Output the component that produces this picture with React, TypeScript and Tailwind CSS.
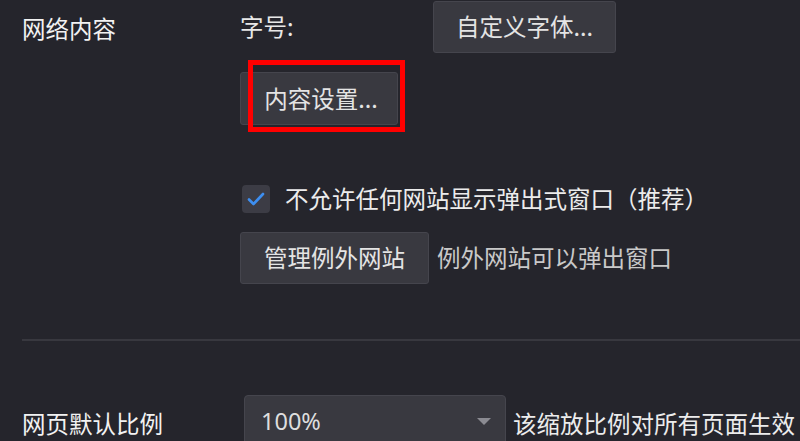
import React from 'react';

const font = { fontFamily: '"Noto Sans CJK SC", "Noto Sans", sans-serif' };

const Btn: React.FC<{ children: React.ReactNode; className?: string }> = ({ children, className = '' }) => (
  <button
    className={`h-[52px] rounded-[3px] border border-[#45454d] bg-[#393940] text-[23.5px] text-[#e4e4e4] leading-none flex items-center justify-center ${className}`}
  >
    {children}
  </button>
);

export default function App() {
  return (
    <div className="w-[800px] h-[441px] bg-[#25252c] overflow-hidden text-[#e4e4e4]" style={font}>
      <div className="flex pt-px">
        <div className="w-[218px] ml-[22px] pt-[13px] text-[23.5px] leading-[28px] text-[#f2f2f2]">网络内容</div>
        <div className="flex-1">
          <div className="flex items-center">
            <span className="w-[193px] text-[23.5px] text-[#e8e8e8]">字号:</span>
            <Btn className="w-[183px]">自定义字体...</Btn>
          </div>
          <div className="relative mt-[19px] h-[53px]">
            <Btn className="w-[158px] h-[53px] pl-[4px]">内容设置...</Btn>
            <div className="absolute left-[8px] top-[-12px] w-[157px] h-[72px] border-[5px] border-[#ff0000]" />
          </div>
          <div className="flex items-center mt-[60px] ml-[2px] h-[28px]">
            <span className="w-[28px] h-[28px] rounded-[4px] bg-[#3c3c45] flex items-center justify-center">
              <svg width="18" height="14" viewBox="0 0 18 14" fill="none">
                <path d="M2 7.5 L6.5 12 L16 2" stroke="#3d8ef0" strokeWidth="2.6" strokeLinecap="round" strokeLinejoin="round" />
              </svg>
            </span>
            <span className="ml-[15px] text-[23.5px] text-[#ececec]">不允许任何网站显示弹出式窗口（推荐）</span>
          </div>
          <div className="flex items-center mt-[19px]">
            <Btn className="w-[189px]">管理例外网站</Btn>
            <span className="ml-[8px] text-[23.5px] text-[#c9c9c9]">例外网站可以弹出窗口</span>
          </div>
        </div>
      </div>
      <div className="ml-[22px] mt-[55px] h-[2px] bg-[#38383f]" />
      <div className="flex items-start mt-[54px]">
        <div className="w-[222px] ml-[22px] mt-[14px] text-[23.5px] leading-[28px] text-[#f2f2f2]">网页默认比例</div>
        <div className="w-[262px] h-[52px] rounded-[4px] border border-[#45454d] bg-[#393940] flex items-center pl-[16px] pr-[14px]">
          <span className="flex-1 text-[23.5px] text-[#dedede] mt-[2px]" style={{ fontFamily: '"Noto Sans", sans-serif' }}>100%</span>
          <svg width="14" height="8" viewBox="0 0 14 8" className="mt-[2px]">
            <path d="M0 0 H14 L7 7 Z" fill="#8b8b92" />
          </svg>
        </div>
        <span className="ml-[7px] mt-[14px] text-[23.5px] leading-[28px] text-[#ececec] whitespace-nowrap">该缩放比例对所有页面生效</span>
      </div>
    </div>
  );
}
